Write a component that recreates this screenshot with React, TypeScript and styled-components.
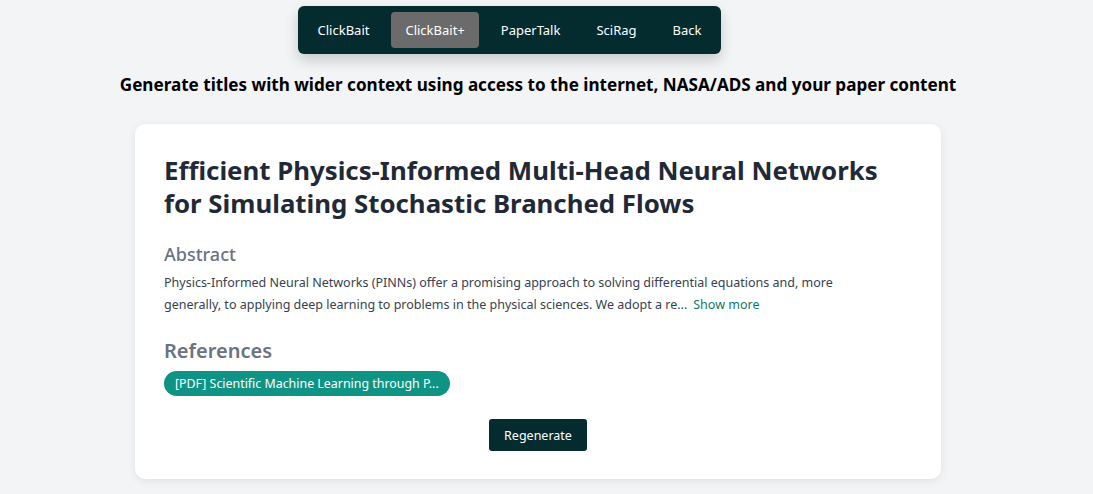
import React from "react";
import styled, { createGlobalStyle } from "styled-components";

const Global = createGlobalStyle`
  html, body { margin: 0; padding: 0; background: #f3f4f6; }
  body { font-family: "Noto Sans", "Open Sans", sans-serif; }
  * { box-sizing: border-box; }
`;

const Page = styled.div`
  width: 1076px;
  display: flex;
  flex-direction: column;
  align-items: center;
  padding-top: 6px;
  min-height: 494px;
`;

const Nav = styled.nav`
  display: flex;
  gap: 8px;
  padding: 6px;
  margin-right: 57px;
  background: #042b2e;
  border-radius: 6px;
  box-shadow: 0 6px 14px rgba(0, 0, 0, 0.18);
`;

const NavButton = styled.button<{ $active?: boolean }>`
  border: none;
  font-family: inherit;
  font-size: 13px;
  color: #ffffff;
  background: ${(p) => (p.$active ? "#6b6b6b" : "transparent")};
  border-radius: 4px;
  height: 36px;
  padding: 0 14px;
  cursor: pointer;
`;

const Heading = styled.h1`
  margin: 20px 0 0;
  font-size: 17.1px;
  font-weight: 700;
  color: #000;
  line-height: 22px;
`;

const Card = styled.section`
  margin-top: 28px;
  width: 806px;
  background: #fff;
  border-radius: 10px;
  box-shadow: 0 2px 8px rgba(0, 0, 0, 0.08);
  padding: 30px 29px 28px;
  display: flex;
  flex-direction: column;
`;

const Title = styled.h2`
  margin: 0;
  font-size: 25.8px;
  font-weight: 700;
  line-height: 33px;
  color: #1f2937;
`;

const SectionLabel = styled.h3<{ $size: number }>`
  margin: 0;
  font-size: ${(p) => p.$size}px;
  font-weight: 600;
  color: #6b7280;
`;

const AbstractLabel = styled(SectionLabel)`
  margin-top: 21px;
  font-weight: 500;
  line-height: 26px;
`;

const RefLabel = styled(SectionLabel)`
  margin-top: 21px;
  line-height: 28px;
`;

const Abstract = styled.p`
  margin: 5px 0 0;
  max-width: 712px;
  font-size: 12.5px;
  line-height: 22px;
  color: #374151;
`;

const ShowMore = styled.span`
  color: #0f766e;
  margin-left: 6px;
  cursor: pointer;
`;

const Chips = styled.div`
  display: flex;
  gap: 8px;
  margin-top: 6px;
`;

const Chip = styled.span`
  display: inline-flex;
  align-items: center;
  height: 25px;
  padding: 0 11px;
  border-radius: 999px;
  background: #0e9384;
  color: #fff;
  font-size: 12.4px;
`;

const Actions = styled.div`
  display: flex;
  justify-content: center;
  margin-top: 23px;
`;

const Regenerate = styled.button`
  border: none;
  background: #042b2e;
  color: #fff;
  font-family: inherit;
  font-size: 12.5px;
  height: 32px;
  padding: 0 15px;
  border-radius: 3px;
  cursor: pointer;
`;

export default function App() {
  return (
    <>
      <Global />
      <Page>
        <Nav>
          <NavButton>ClickBait</NavButton>
          <NavButton $active>ClickBait+</NavButton>
          <NavButton>PaperTalk</NavButton>
          <NavButton>SciRag</NavButton>
          <NavButton>Back</NavButton>
        </Nav>
        <Heading>
          Generate titles with wider context using access to the internet, NASA/ADS and your paper content
        </Heading>
        <Card>
          <Title>
            Efficient Physics-Informed Multi-Head Neural Networks
            <br />
            for Simulating Stochastic Branched Flows
          </Title>
          <AbstractLabel $size={18}>Abstract</AbstractLabel>
          <Abstract>
            Physics-Informed Neural Networks (PINNs) offer a promising approach to solving differential equations and, more
            generally, to applying deep learning to problems in the physical sciences. We adopt a re...
            <ShowMore>Show more</ShowMore>
          </Abstract>
          <RefLabel $size={20}>References</RefLabel>
          <Chips>
            <Chip>[PDF] Scientific Machine Learning through P...</Chip>
          </Chips>
          <Actions>
            <Regenerate>Regenerate</Regenerate>
          </Actions>
        </Card>
      </Page>
    </>
  );
}
